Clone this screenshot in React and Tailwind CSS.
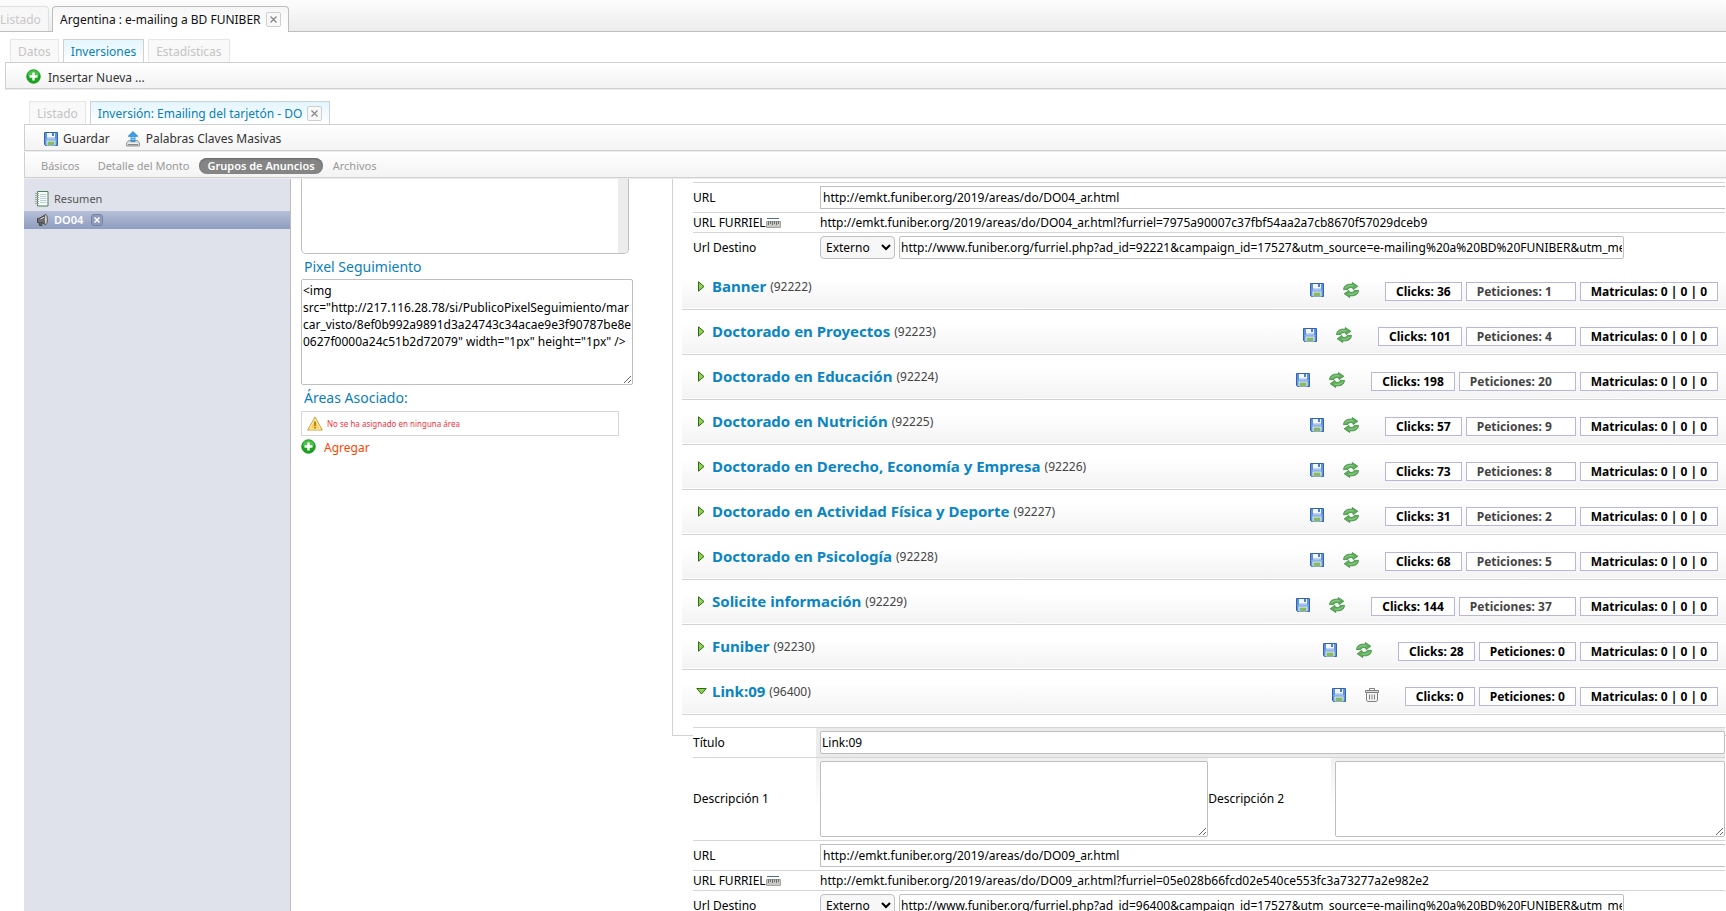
import { useState } from "react";
import clsx from "clsx";

const ads = [
  { id: 92222, name: "Banner", clicks: 36, requests: 1 },
  { id: 92223, name: "Doctorado en Proyectos", clicks: 101, requests: 4 },
  { id: 92224, name: "Doctorado en Educación", clicks: 198, requests: 20 },
  { id: 92225, name: "Doctorado en Nutrición", clicks: 57, requests: 9 },
  { id: 92226, name: "Doctorado en Derecho, Economía y Empresa", clicks: 73, requests: 8 },
  { id: 92227, name: "Doctorado en Actividad Física y Deporte", clicks: 31, requests: 2 },
  { id: 92228, name: "Doctorado en Psicología", clicks: 68, requests: 5 },
  { id: 92229, name: "Solicite información", clicks: 144, requests: 37 },
  { id: 92230, name: "Funiber", clicks: 28, requests: 0 },
  { id: 96400, name: "Link:09", clicks: 0, requests: 0, open: true },
];

const pixelCode =
  '<img src="http://217.116.28.78/si/PublicoPixelSeguimiento/marcar_visto/8ef0b992a9891d3a24743c34acae9e3f90787be8e0627f0000a24c51b2d72079" width="1px" height="1px" />';

function SaveIcon() {
  return (
    <svg width="14" height="14" viewBox="0 0 14 14" aria-hidden="true">
      <path d="M0.500 0.500h13v13h-12l-1-1z" fill="#5f93df" stroke="#3263b0" />
      <path d="M3 1h8v5.500h-8z" fill="#f3f7fd" />
      <path d="M3 5.500h8" stroke="#c3d5ee" />
      <path d="M8 1h2v3h-2z" fill="#4b7fd0" />
      <path d="M1.500 7.500h11" stroke="#8db4ec" />
      <path d="M2.500 8.500h9v5h-9z" fill="#e9f0fa" />
      <path d="M3.500 9.500h7v3.500h-7z" fill="#86bb62" />
    </svg>
  );
}

function RefreshIcon() {
  return (
    <svg width="16" height="16" viewBox="0 0 16 16" aria-hidden="true">
      <g fill="#5fae5b" stroke="#3b8a3f" strokeWidth="0.8" strokeLinejoin="round">
        <path d="M0.500 7.600C0.700 3.600 4.500 1.500 9.300 2.300L9.300 0.500L14.800 4.200L10.200 7.600L9.700 5.900C7.300 5.100 5.700 5.700 4.800 7.600z" />
        <path d="M15.500 8.400C15.300 12.400 11.500 14.500 6.700 13.700L6.700 15.500L1.200 11.800L5.800 8.400L6.300 10.100C8.700 10.900 10.300 10.300 11.200 8.400z" />
      </g>
      <path d="M2 6.300C3.300 4.100 6.500 3.200 10.300 3.900M14 9.700C12.700 11.900 9.500 12.800 5.700 12.100" fill="none" stroke="#9bd592" strokeWidth="0.900" />
    </svg>
  );
}

function TrashIcon() {
  return (
    <svg width="14" height="14" viewBox="0 0 14 14" aria-hidden="true" fill="none" stroke="#808080">
      <path d="M4.500 2.500V0.500h5v2" />
      <path d="M0.500 2.500h13v2h-13z" fill="#dcdcdc" />
      <path d="M1.500 4.500v7.500l1 1.500h9l1-1.500v-7.500z" fill="#f4f4f4" />
      <path d="M4.500 6.500v5M7 6.500v5M9.500 6.500v5" />
    </svg>
  );
}

function PlusIcon() {
  return (
    <svg width="15" height="15" viewBox="0 0 15 15" aria-hidden="true" className="mb-0.5">
      <circle cx="7.500" cy="7.500" r="6.800" fill="#1ba41f" stroke="#149018" strokeWidth="0.800" />
      <path d="M1.800 6.500a5.700 5.300 0 0 1 11.400 0q-5.700 2.500-11.400 0z" fill="#4cc24b" />
      <path d="M7.500 3.500v8M3.500 7.500h8" stroke="#fff" strokeWidth="2.400" />
    </svg>
  );
}

function UploadIcon() {
  return (
    <svg width="14" height="16" viewBox="0 0 14 16" aria-hidden="true">
      <path d="M2.500 9.500L0.500 12v3h13v-3l-2-2.500z" fill="#d4d4d4" stroke="#8a8a8a" strokeWidth="0.800" />
      <path d="M1.500 12.300h11" stroke="#f4f4f4" />
      <path d="M2 13.700h10" stroke="#777" />
      <path d="M7 0.500L11.800 5.300H9V10.500H5V5.300H2.200z" fill="#3d9fe8" stroke="#1c74c0" strokeWidth="0.700" />
      <path d="M5.300 6.500h3.400M5.300 8.300h3.400" stroke="#e6f4ff" strokeWidth="0.700" />
    </svg>
  );
}

function NotebookIcon() {
  return (
    <svg width="14" height="16" viewBox="0 0 14 16" aria-hidden="true">
      <path d="M2.500 0.500h10.500v14.500h-10.500z" fill="#f6fbf6" stroke="#4e7f5c" />
      <path d="M5 3.500h6.500M5 5.500h6.500M5 7.500h6.500M5 9.500h6.500M5 11.500h6.500" stroke="#b9cfe0" />
      <path d="M0 2.500h4M0 4.500h4M0 6.500h4M0 8.500h4M0 10.500h4M0 12.500h4" stroke="#9aa9a2" />
    </svg>
  );
}

function SpeakerIcon() {
  return (
    <svg width="11" height="12" viewBox="0 0 11 12" aria-hidden="true">
      <path d="M0.500 4.500L3 4L8.500 0.500v10L4 8.500l1 3H2.500L2 8.500H0.500z" fill="#6d6d6d" stroke="#333" strokeWidth="0.800" />
      <ellipse cx="8.800" cy="5.500" rx="1.700" ry="5" fill="#c9c9c9" stroke="#444" strokeWidth="0.800" />
      <path d="M3.500 5L7 3.200" stroke="#ddd" />
    </svg>
  );
}

function WarningIcon() {
  return (
    <svg width="16" height="15" viewBox="0 0 16 15" aria-hidden="true">
      <path d="M8 1L15.300 14H0.700z" fill="#f7cf57" stroke="#d0a03a" strokeLinejoin="round" />
      <path d="M8 3L13.500 13H2.500z" fill="none" stroke="#fdf0b8" />
      <path d="M8 5.500v4.500M8 11v1.500" stroke="#a87412" strokeWidth="1.600" />
    </svg>
  );
}

function RulerIcon() {
  return (
    <svg width="15" height="11" viewBox="0 0 15 11" aria-hidden="true" className="mb-px">
      <path d="M1 1.500h12" stroke="#4d6f8f" />
      <path d="M0.500 4.500h14v6h-14z" fill="#c8c8c4" stroke="#a4a4a0" />
      <path d="M2.500 4v4M4.500 4v3M6.500 4v4M8.500 4v3M10.500 4v4M12.500 4v3" stroke="#6f6f6b" />
    </svg>
  );
}

function Arrow({ open }) {
  return open ? (
    <svg width="11" height="7" viewBox="0 0 11 7" aria-hidden="true">
      <path d="M0.800 0.500h9.400L5.500 6z" fill="#8fd14f" stroke="#2f6b12" />
    </svg>
  ) : (
    <svg width="7" height="11" viewBox="0 0 7 11" aria-hidden="true">
      <path d="M0.500 0.800v9.400L6 5.500z" fill="#8fd14f" stroke="#2f6b12" />
    </svg>
  );
}

function CloseButton({ label }) {
  return (
    <button
      type="button"
      aria-label={label}
      className="flex h-[15px] w-[15px] items-center justify-center rounded-xs border border-[#cfcfcf] bg-[#f8f8f8]"
    >
      <svg width="7" height="7" viewBox="0 0 7 7" aria-hidden="true">
        <path d="M0.500 0.500l6 6M6.500 0.500l-6 6" stroke="#888" strokeWidth="1.300" />
      </svg>
    </button>
  );
}

function SubTab({ active, onClose, children }) {
  return (
    <div
      className={clsx(
        "flex items-center border px-[7px] pt-0.5",
        active
          ? "-mb-px h-6 gap-[5px] border-[#d0d0d0] border-b-white bg-linear-to-b from-[#e3f5fd] to-white pb-px text-[#0a7fb8]"
          : "h-[23px] border-b-0 border-[#e6e6e6] bg-[#f9f9f9] text-[#c4c4c4]"
      )}
    >
      <button type="button">{children}</button>
      {onClose && <CloseButton label="Cerrar inversión" />}
    </div>
  );
}

function Field({ label, htmlFor, children, className, span = 3 }) {
  return (
    <tr>
      <th scope="row" className="border-t border-[#d6d6d6] p-0 text-left font-normal">
        <label htmlFor={htmlFor} className="flex items-center">
          {label}
        </label>
      </th>
      <td colSpan={span} className={clsx("border-t border-[#d6d6d6]", className)}>
        {children}
      </td>
    </tr>
  );
}

function AdForm({ id, url, furriel, title }) {
  const target = `http://www.funiber.org/furriel.php?ad_id=${id}&campaign_id=17527&utm_source=e-mailing%20a%20BD%20FUNIBER&utm_medium=e-mailing`;

  return (
    <table className="w-full table-fixed border-separate border-spacing-0 bg-white text-xs leading-4 text-black">
      <colgroup>
        <col className="w-[123px]" />
        <col className="w-[38%]" />
        <col className="w-[123px]" />
        <col />
      </colgroup>
      <tbody>
        {title && (
          <>
            <Field label="Título" htmlFor={`title-${id}`} className="bg-[#ebebeb] py-[3px] pl-1">
              <input
                id={`title-${id}`}
                defaultValue={title}
                className="block h-[23px] w-full rounded-xs border border-[#bfbfbf] bg-white px-px"
              />
            </Field>
            <tr>
              <th scope="row" className="border-t border-[#d6d6d6] p-0 text-left font-normal">
                <label htmlFor={`desc1-${id}`}>Descripción 1</label>
              </th>
              <td className="border-t border-[#d6d6d6] bg-linear-to-b from-[#f0f0f0] to-white to-60% py-[3px] pl-1">
                <textarea
                  id={`desc1-${id}`}
                  className="block h-[76px] w-full resize rounded-xs border border-[#bfbfbf] bg-white"
                />
              </td>
              <th scope="row" className="border-t border-[#d6d6d6] p-0 text-left font-normal">
                <label htmlFor={`desc2-${id}`}>Descripción 2</label>
              </th>
              <td className="border-t border-[#d6d6d6] bg-linear-to-b from-[#f0f0f0] to-white to-60% py-[3px] pl-1">
                <textarea
                  id={`desc2-${id}`}
                  className="block h-[76px] w-full resize rounded-xs border border-[#bfbfbf] bg-white"
                />
              </td>
            </tr>
          </>
        )}
        <Field label="URL" htmlFor={`url-${id}`} className="py-[3px] pl-1">
          <input
            id={`url-${id}`}
            defaultValue={url}
            className="block h-[23px] w-full border border-r-0 border-[#bfbfbf] px-0.5"
          />
        </Field>
        <Field
          label={
            <>
              URL FURRIEL
              <RulerIcon />
            </>
          }
          className="h-5 p-0 pl-1"
        >
          {`${url}?furriel=${furriel}`}
        </Field>
        <Field label="Url Destino" htmlFor={`target-${id}`} className="py-[3px] pl-1">
          <div className="flex gap-1">
            <select
              aria-label="Tipo de destino"
              className="h-[23px] w-[75px] rounded-sm border border-[#bfbfbf] bg-[#f7f7f7] px-px"
            >
              <option>Externo</option>
              <option>Interno</option>
            </select>
            <input
              id={`target-${id}`}
              defaultValue={target}
              className="h-[23px] w-[725px] rounded-xs border border-[#bfbfbf] px-px"
            />
          </div>
        </Field>
      </tbody>
    </table>
  );
}

function AdRow({ ad }) {
  const { id, name, clicks, requests, open } = ad;

  return (
    <div className="flex h-[45px] justify-between border-b border-[#d2d2d2] bg-linear-to-b from-white from-30% to-[#f3f3f3] pr-2 shadow-[inset_0_-1px_0_#fff]">
      <div className="flex h-[42px] items-center">
        <button type="button" className="flex items-center">
          <span className="flex w-[30px] justify-center pl-2">
            <Arrow open={open} />
          </span>
          <span className="text-[15px] leading-6 font-bold text-[#0a85c2]">{name}</span>
        </button>
        <span className="pt-px pl-1 text-xs text-[#444]">({id})</span>
      </div>
      <div className="flex pt-[17px] text-xs leading-[17px] font-bold text-black">
        <div className="flex h-4 items-center gap-[19px] pr-[26px]">
          <button type="button" aria-label={`Guardar ${name}`}>
            <SaveIcon />
          </button>
          <button type="button" aria-label={open ? `Eliminar ${name}` : `Actualizar ${name}`}>
            {open ? <TrashIcon /> : <RefreshIcon />}
          </button>
        </div>
        <div className="flex h-[19px] gap-1">
          <span className="border border-[#b9b6dd] bg-white px-2.5">Clicks: {clicks}</span>
          <span
            className={clsx(
              "border border-[#b9b6dd] bg-white pl-2.5",
              requests > 0 ? "pr-[23px] text-[#444]" : "pr-2.5"
            )}
          >
            Peticiones: {requests}
          </span>
          <span className="border border-[#b9b6dd] bg-white px-2.5">Matriculas: 0 | 0 | 0</span>
        </div>
      </div>
    </div>
  );
}

const sections = ["Básicos", "Detalle del Monto", "Grupos de Anuncios", "Archivos"];

export default function App() {
  const [section, setSection] = useState("Grupos de Anuncios");

  return (
    <div className="flex h-screen flex-col overflow-hidden bg-white font-['Noto_Sans',sans-serif] text-xs leading-4 text-[#333]">
      <header className="flex h-8 shrink-0 items-end gap-[3px] border-b border-[#bdbdbd] bg-linear-to-b from-[#fdfdfd] to-[#ececec]">
        <button
          type="button"
          className="h-[25px] w-[49px] rounded-tr-sm border-t border-r border-[#e0e0e0] bg-[#f7f7f7] pt-px text-left text-[#c8c8c8]"
        >
          Listado
        </button>
        <div className="-mb-px flex h-[26px] items-center gap-[5px] rounded-t-sm border border-b-0 border-[#bdbdbd] bg-linear-to-b from-[#f6f6f6] to-white px-[7px] text-[#111]">
          <button type="button">Argentina : e-mailing a BD FUNIBER</button>
          <CloseButton label="Cerrar campaña" />
        </div>
      </header>

      <nav className="flex shrink-0 gap-1 pt-[7px] pl-2.5">
        <SubTab>Datos</SubTab>
        <SubTab active>Inversiones</SubTab>
        <SubTab>Estadísticas</SubTab>
      </nav>
      <div className="mb-px ml-[5px] flex h-[27px] shrink-0 items-center border border-r-0 border-[#d0d0d0] bg-linear-to-b from-white to-[#f3f3f3] pt-1 pl-5 shadow-[0_1px_0_#ececec]">
        <button type="button" className="flex items-center gap-[7px]">
          <PlusIcon />
          Insertar Nueva ...
        </button>
      </div>

      <nav className="flex shrink-0 gap-1 pt-[11px] pl-[29px]">
        <SubTab>Listado</SubTab>
        <SubTab active onClose>
          Inversión: Emailing del tarjetón - DO
        </SubTab>
      </nav>

      <div className="ml-6 flex min-h-0 flex-1 flex-col">
        <div className="mb-px flex h-[27px] shrink-0 items-center gap-4 border border-r-0 border-[#d0d0d0] bg-linear-to-b from-white to-[#f3f3f3] pt-0.5 pl-[19px] shadow-[0_1px_0_#ececec]">
          <button type="button" className="flex items-center gap-[5px]">
            <SaveIcon />
            Guardar
          </button>
          <button type="button" className="flex items-center gap-1.5">
            <UploadIcon />
            Palabras Claves Masivas
          </button>
        </div>
        <div className="mb-px flex h-[26px] shrink-0 items-center gap-0.5 border-b border-l border-[#d0d0d0] bg-linear-to-b from-white to-[#f3f3f3] pt-0.5 pl-2 text-[11px] shadow-[0_1px_0_#ececec]">
          {sections.map((name) => (
            <button
              key={name}
              type="button"
              onClick={() => setSection(name)}
              className={clsx(
                "rounded-full px-2 leading-4",
                section === name
                  ? "bg-[#858585] font-semibold text-white shadow-[inset_0_1px_2px_#666]"
                  : "text-[#999]"
              )}
            >
              {name}
            </button>
          ))}
        </div>

        <div className="flex min-h-0 flex-1">
          <aside className="w-[267px] shrink-0 border-r border-[#bbbbbb] bg-[#dfe2ea] pt-2.5 text-[11px]">
            <button type="button" className="mb-0.5 flex h-5 w-full items-center gap-[5px] pl-[11px] text-[#555]">
              <NotebookIcon />
              Resumen
            </button>
            <div className="flex h-[18px] items-center bg-linear-to-b from-[#b6bfd8] to-[#8f9dbf] pl-[13px] font-semibold text-white">
              <button type="button" className="flex items-center gap-1.5">
                <SpeakerIcon />
                DO04
              </button>
              <button
                type="button"
                aria-label="Cerrar DO04"
                className="ml-2 flex h-3 w-3 items-center justify-center rounded-[3px] border border-[#7483a8] bg-[#8f9bbb]"
              >
                <svg width="6" height="6" viewBox="0 0 6 6" aria-hidden="true">
                  <path d="M0.500 0.500l5 5M5.500 0.500l-5 5" stroke="#fff" strokeWidth="1.500" />
                </svg>
              </button>
            </div>
          </aside>

          <div className="w-[381px] shrink-0 overflow-hidden pl-2.5">
            <div className="flex h-[75px] w-[328px] overflow-hidden rounded-b-[5px] border border-t-0 border-[#bfbfbf]">
              <textarea aria-label="Observaciones" className="h-full flex-1 resize-none" />
              <div className="w-2.5 bg-[#ececec]" />
            </div>
            <label htmlFor="pixel" className="block pt-[3px] pb-0.5 pl-[3px] text-sm leading-5 text-[#0a7fb8]">
              Pixel Seguimiento
            </label>
            <textarea
              id="pixel"
              spellCheck={false}
              defaultValue={pixelCode}
              className="block h-[106px] w-[332px] resize rounded-xs border border-[#bfbfbf] py-0.5 pl-px leading-[17px] text-black"
            />
            <h3 className="py-[3px] pl-[3px] text-sm leading-5 text-[#0a7fb8]">Áreas Asociado:</h3>
            <div className="flex h-[25px] w-[318px] items-center gap-1 border border-[#d6d6d6] pl-[5px] text-[8px] text-[#f03340]">
              <WarningIcon />
              No se ha asignado en ninguna área
            </div>
            <button type="button" className="mt-[3px] flex items-center gap-2 text-[#ff4500]">
              <PlusIcon />
              Agregar
            </button>
          </div>

          <main className="min-w-0 flex-1 overflow-hidden">
            <div className="border-b border-l border-[#d2d2d2] pt-[3px] pl-[9px]">
              <div className="pb-[3px] pl-[11px] pr-px">
                <AdForm
                  id={92221}
                  url="http://emkt.funiber.org/2019/areas/do/DO04_ar.html"
                  furriel="7975a90007c37fbf54aa2a7cb8670f57029dceb9"
                />
              </div>
              {ads.map((ad) => (
                <AdRow key={ad.id} ad={ad} />
              ))}
              {/* the open form runs past the bottom edge of the group */}
              <div className="h-5 pt-3 pl-[11px] pr-px">
                <AdForm
                  id={96400}
                  title="Link:09"
                  url="http://emkt.funiber.org/2019/areas/do/DO09_ar.html"
                  furriel="05e028b66fcd02e540ce553fc3a73277a2e982e2"
                />
              </div>
            </div>
          </main>
        </div>
      </div>
    </div>
  );
}
